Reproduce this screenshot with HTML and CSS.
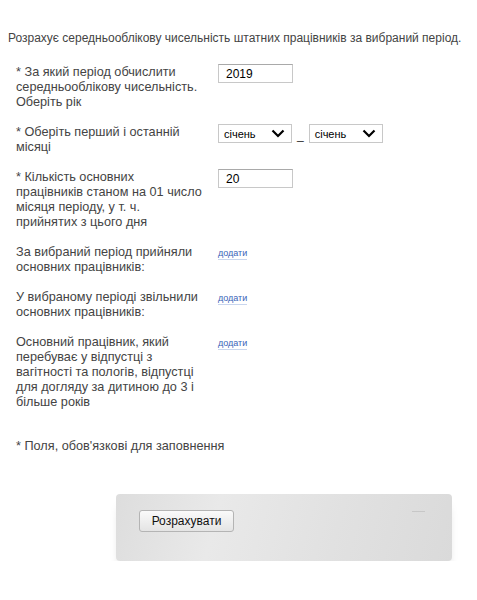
FILE: index.html
```html
<!DOCTYPE html>
<html lang="uk">
<head>
<meta charset="utf-8">
<title>Середньооблікова чисельність</title>
<link rel="stylesheet" href="styles.css">
</head>
<body>
<div class="page">
  <p class="intro">Розрахує середньооблікову чисельність штатних працівників за вибраний період.</p>

  <div class="form">
    <div class="row">
      <div class="label">* За який період обчислити середньооблікову чисельність. Оберіть рік</div>
      <div class="control"><div class="input">2019</div></div>
    </div>
    <div class="row">
      <div class="label">* Оберіть перший і останній місяці</div>
      <div class="control months">
        <div class="select"><span>січень</span><svg width="14" height="9" viewBox="0 0 14 9"><path d="M1.5 1.5 L7 7 L12.5 1.5" fill="none" stroke="#000" stroke-width="2.2"/></svg></div>
        <span class="dash">_</span>
        <div class="select"><span>січень</span><svg width="14" height="9" viewBox="0 0 14 9"><path d="M1.5 1.5 L7 7 L12.5 1.5" fill="none" stroke="#000" stroke-width="2.2"/></svg></div>
      </div>
    </div>
    <div class="row">
      <div class="label">* Кількість основних працівників станом на 01 число місяця періоду, у т. ч. прийнятих з цього дня</div>
      <div class="control"><div class="input">20</div></div>
    </div>
    <div class="row">
      <div class="label">За вибраний період прийняли основних працівників:</div>
      <div class="control"><a class="add" href="#">додати</a></div>
    </div>
    <div class="row">
      <div class="label">У вибраному періоді звільнили основних працівників:</div>
      <div class="control"><a class="add" href="#">додати</a></div>
    </div>
    <div class="row">
      <div class="label">Основний працівник, який перебуває у відпустці з вагітності та пологів, відпустці для догляду за дитиною до 3 і більше років</div>
      <div class="control"><a class="add" href="#">додати</a></div>
    </div>
  </div>

  <p class="note">* Поля, обов'язкові для заповнення</p>

  <div class="panel">
    <button class="btn" type="button">Розрахувати</button>
    <span class="panel-mark"></span>
  </div>
</div>
</body>
</html>
```
FILE: styles.css
```css
html, body {
  margin: 0;
  padding: 0;
  background: #fff;
}
.page {
  padding: 31px 8px 0 8px;
  font-family: "Liberation Sans", Arial, sans-serif;
  color: #444;
}
.intro {
  margin: 0;
  font-size: 12px;
  line-height: 15px;
}
.form {
  margin-top: 19px;
  padding-left: 8px;
  display: flex;
  flex-direction: column;
  gap: 15px;
}
.row {
  display: grid;
  grid-template-columns: 188px 1fr;
  column-gap: 14px;
  align-items: start;
}
.label {
  font-size: 12.7px;
  line-height: 15px;
}
.control {
  display: flex;
  align-items: center;
}
.input {
  box-sizing: border-box;
  width: 75px;
  height: 19px;
  margin-top: -1px;
  border: 1px solid #c8c8c8;
  border-top-color: #a9a9a9;
  padding: 2px 7px 0;
  font-size: 12px;
  line-height: 14px;
  color: #000;
}
.months {
  gap: 5px;
}
.select {
  box-sizing: border-box;
  width: 74px;
  height: 19px;
  margin-top: -1px;
  border: 1px solid #c8c8c8;
  display: flex;
  align-items: center;
  justify-content: space-between;
  padding: 0 6px 0 5px;
  font-size: 11px;
  color: #000;
}
.dash {
  font-size: 12px;
  line-height: 12px;
  color: #333;
  align-self: flex-end;
  margin-bottom: 2px;
}
.add {
  font-size: 9px;
  line-height: 11px;
  margin-top: 3px;
  color: #3a63b8;
  text-decoration: none;
  border-bottom: 1px solid #c9d6ee;
}
.note {
  margin: 29px 0 0 8px;
  font-size: 12.7px;
  line-height: 15px;
}
.panel {
  position: relative;
  box-sizing: border-box;
  width: 336px;
  height: 67px;
  margin: 40px 0 0 108px;
  padding: 16px 0 0 23px;
  border-radius: 4px;
  background: linear-gradient(105deg, #dddddd 0%, #e9e9e9 30%, #e1e1e1 65%, #dadada 100%);
  box-shadow: 0 9px 10px -5px rgba(0,0,0,0.22);
}
.btn {
  box-sizing: border-box;
  width: 95px;
  height: 22px;
  padding: 0;
  border: 1px solid #b4b4b4;
  border-radius: 3px;
  background: linear-gradient(#fafafa, #e4e4e4);
  font-family: "Liberation Sans", Arial, sans-serif;
  font-size: 12px;
  color: #111;
}
.panel-mark {
  position: absolute;
  left: 296px;
  top: 17px;
  width: 13px;
  height: 1px;
  background: #c7c7c7;
}
```
